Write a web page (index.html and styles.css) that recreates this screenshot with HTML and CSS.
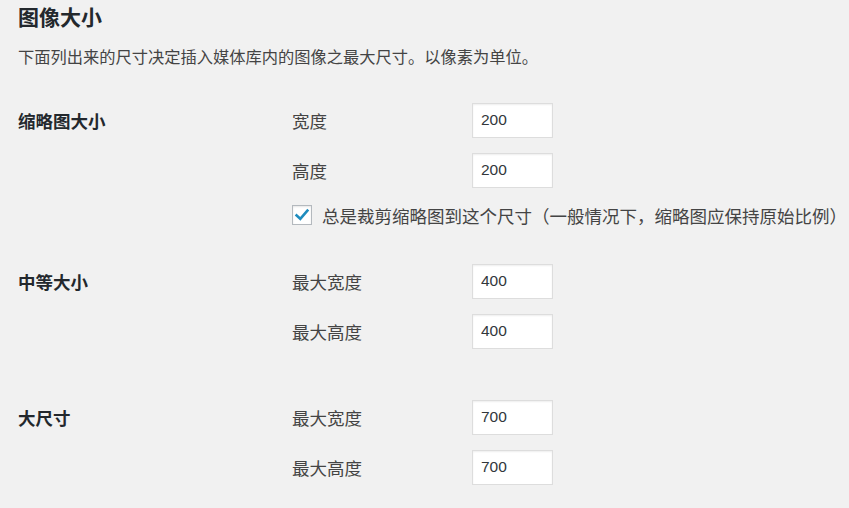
FILE: index.html
```html
<!DOCTYPE html>
<html lang="zh-CN">
<head>
<meta charset="utf-8">
<title>图像大小</title>
<link rel="stylesheet" href="styles.css">
</head>
<body>
<div class="page">
  <h2 class="title">图像大小</h2>
  <p class="description">下面列出来的尺寸决定插入媒体库内的图像之最大尺寸。以像素为单位。</p>

  <div class="group group-thumb">
    <div class="row-head">缩略图大小</div>
    <label class="field-label">宽度</label>
    <div class="field"><input class="small-text" type="text" value="200"></div>
    <label class="field-label">高度</label>
    <div class="field"><input class="small-text" type="text" value="200"></div>
    <div class="check-row">
      <span class="checkbox">
        <svg width="16" height="16" viewBox="0 0 16 16"><path d="M2.6 8.4 L6.3 11.8 L13.4 3.6" fill="none" stroke="#1e8cbe" stroke-width="2.6" stroke-linecap="square" stroke-linejoin="miter"/></svg>
      </span>
      <span class="check-label">总是裁剪缩略图到这个尺寸（一般情况下，缩略图应保持原始比例）</span>
    </div>
  </div>

  <div class="group group-medium">
    <div class="row-head">中等大小</div>
    <label class="field-label">最大宽度</label>
    <div class="field"><input class="small-text" type="text" value="400"></div>
    <label class="field-label">最大高度</label>
    <div class="field"><input class="small-text" type="text" value="400"></div>
  </div>

  <div class="group group-large">
    <div class="row-head">大尺寸</div>
    <label class="field-label">最大宽度</label>
    <div class="field"><input class="small-text" type="text" value="700"></div>
    <label class="field-label">最大高度</label>
    <div class="field"><input class="small-text" type="text" value="700"></div>
  </div>
</div>
</body>
</html>
```

FILE: styles.css
```css
html, body {
  margin: 0;
  padding: 0;
  background: #f1f1f1;
}

body {
  font-family: "Noto Sans CJK SC", "Noto Sans", sans-serif;
  color: #444;
}

.page {
  padding: 0 18px;
}

.title {
  margin: 0;
  padding-top: 3px;
  font-size: 21px;
  line-height: 27px;
  font-weight: 700;
  color: #23282d;
}

.description {
  margin: 14px 0 0;
  font-size: 16.25px;
  line-height: 24px;
  color: #444;
}

.group {
  display: grid;
  grid-template-columns: 274px 180px auto;
  grid-auto-rows: 50px;
  align-items: center;
}

.group-thumb {
  margin-top: 27px;
  grid-template-rows: 50px 50px 40px;
}
.group-medium { margin-top: 21px; }
.group-large { margin-top: 36px; }

.row-head {
  grid-column: 1;
  grid-row: 1;
  font-size: 17.5px;
  font-weight: 700;
  color: #23282d;
}

.field-label {
  grid-column: 2;
  font-size: 17.5px;
  color: #444;
}

.field {
  grid-column: 3;
  display: flex;
  align-items: center;
}

.small-text {
  box-sizing: border-box;
  width: 81px;
  height: 35px;
  margin: 0;
  padding: 0 8px;
  border: 1px solid #ddd;
  background: #fff;
  box-shadow: inset 0 1px 2px rgba(0, 0, 0, 0.07);
  font-family: "Liberation Sans", "Noto Sans", sans-serif;
  font-size: 15.5px;
  color: #32373c;
  outline: none;
}

.check-row {
  grid-column: 2 / span 2;
  display: flex;
  align-items: center;
  white-space: nowrap;
}

.checkbox {
  box-sizing: border-box;
  width: 20px;
  height: 20px;
  border: 1px solid #b4b9be;
  background: #fff;
  box-shadow: inset 0 1px 2px rgba(0, 0, 0, 0.1);
  display: flex;
  align-items: center;
  justify-content: center;
  margin-right: 10px;
}

.check-label {
  font-size: 17.5px;
  color: #444;
}
```
